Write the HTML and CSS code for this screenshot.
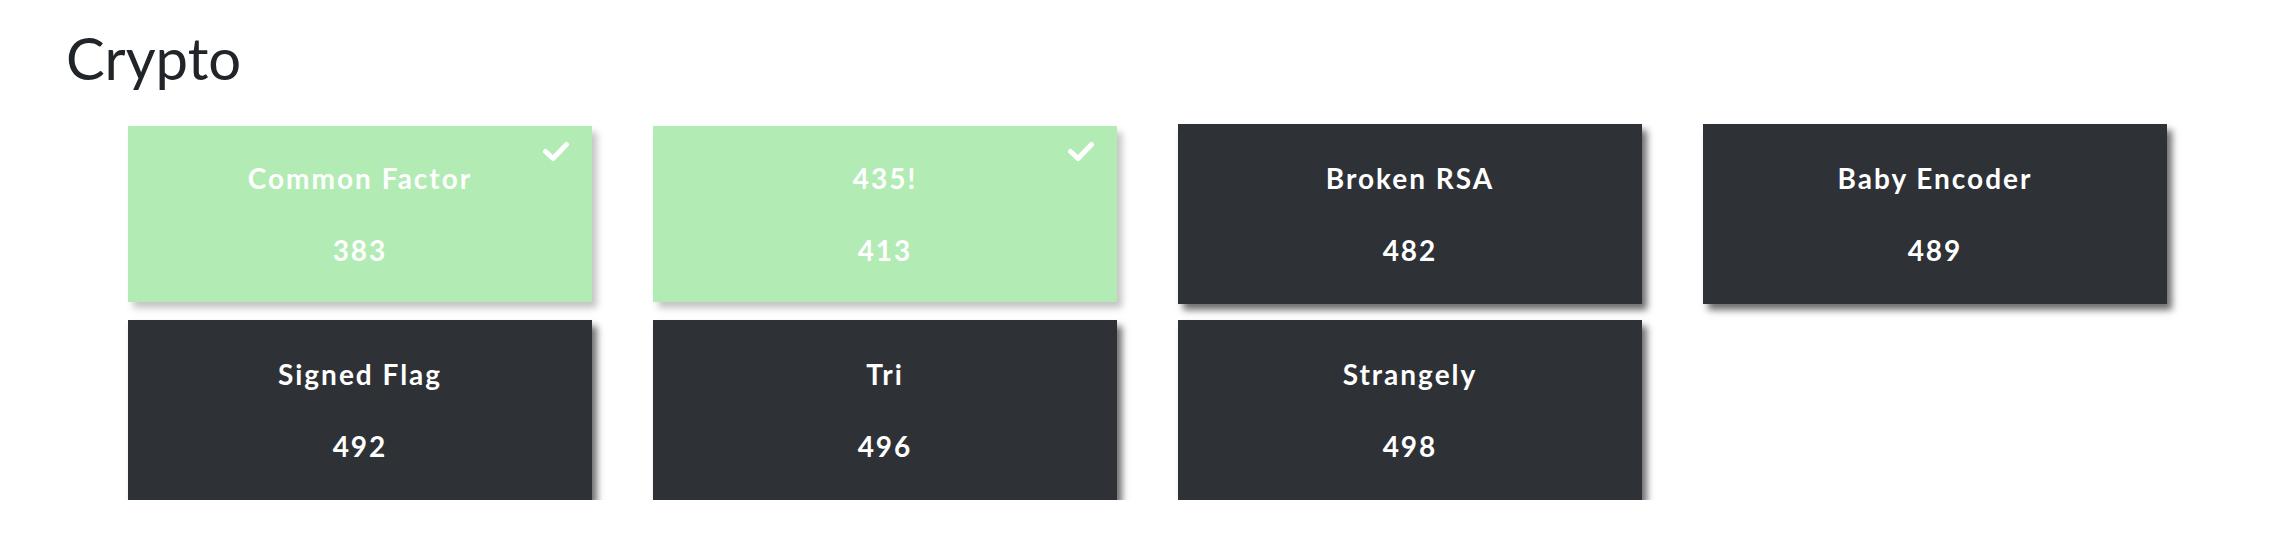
FILE: index.html
```html
<!DOCTYPE html>
<html lang="en">
<head>
<meta charset="utf-8">
<title>Crypto</title>
<link rel="stylesheet" href="styles.css">
</head>
<body>
<main class="page">
  <h1 class="category">Crypto</h1>
  <div class="grid">
    <button class="card solved">
      <svg class="check" viewBox="0 0 28 21" aria-hidden="true"><polyline points="3.5,10.5 11,17.5 24.5,3.5"/></svg>
      <span class="name">Common Factor</span>
      <span class="points">383</span>
    </button>
    <button class="card solved">
      <svg class="check" viewBox="0 0 28 21" aria-hidden="true"><polyline points="3.5,10.5 11,17.5 24.5,3.5"/></svg>
      <span class="name">435!</span>
      <span class="points">413</span>
    </button>
    <button class="card">
      <span class="name">Broken RSA</span>
      <span class="points">482</span>
    </button>
    <button class="card">
      <span class="name">Baby Encoder</span>
      <span class="points">489</span>
    </button>
    <button class="card">
      <span class="name">Signed Flag</span>
      <span class="points">492</span>
    </button>
    <button class="card">
      <span class="name">Tri</span>
      <span class="points">496</span>
    </button>
    <button class="card">
      <span class="name">Strangely</span>
      <span class="points">498</span>
    </button>
  </div>
</main>
</body>
</html>
```

FILE: styles.css
```css
html, body {
  margin: 0;
  padding: 0;
  background: #ffffff;
}

body {
  font-family: Lato, "Open Sans", "Liberation Sans", sans-serif;
  color: #212529;
}

.page {
  padding: 23px 0 0 66px;
}

.category {
  margin: 0;
  font-size: 58px;
  font-weight: 400;
  line-height: 1.2;
  color: #212529;
}

.grid {
  display: grid;
  grid-template-columns: repeat(4, 464px);
  column-gap: 61px;
  row-gap: 16px;
  margin: 31px 0 0 62px;
}

.card {
  position: relative;
  display: flex;
  flex-direction: column;
  align-items: center;
  gap: 38px;
  padding: 37px 0 37px;
  margin: 0;
  border: none;
  background: #2e3236;
  color: #ffffff;
  font-family: Lato, "Open Sans", "Liberation Sans", sans-serif;
  font-weight: 700;
  font-size: 28px;
  line-height: 34px;
  letter-spacing: 2px;
  box-shadow: 5px 6px 7px #6e6e6e;
  cursor: pointer;
}

.card.solved {
  margin: 2px 0;
  padding: 35px 0 35px;
  background: #b3ebb5;
  box-shadow: 5px 6px 7px #c4c4c4;
}

.name, .points {
  display: block;
}

.check {
  position: absolute;
  top: 15px;
  right: 22px;
  width: 28px;
  height: 21px;
  fill: none;
  stroke: #ffffff;
  stroke-width: 5;
  stroke-linecap: round;
  stroke-linejoin: round;
}
```
